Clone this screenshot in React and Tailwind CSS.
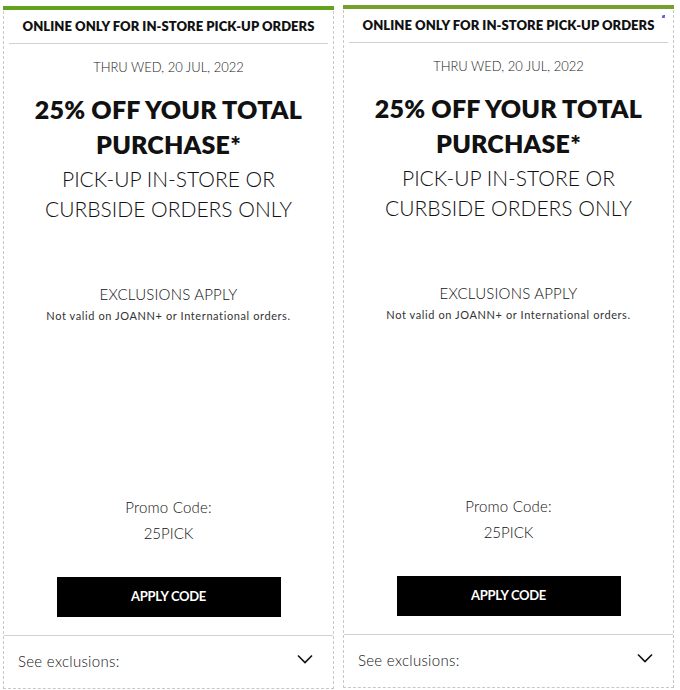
function Coupon({ offset, bar, dot }) {
  return (
    <div className={`relative w-[331px] border border-dashed border-[#c8c8c8] border-t-0 bg-white ${offset}`}>
      <div className={`h-1 -mx-px ${bar}`} />
      {dot && (
        <div className="absolute right-[8px] top-[10px] w-[3px] h-[3px] bg-gradient-to-br from-[#e0c000] via-[#2060ff] to-[#ff4040]" />
      )}
      <div className="h-[33px] flex items-center justify-center text-[13px] font-extrabold text-[#111] tracking-[0.05px]">
        ONLINE ONLY FOR IN-STORE PICK-UP ORDERS
      </div>
      <div className="mx-[5px] h-px bg-[#d0d0d0]" />
      <div className="flex flex-col items-center text-center">
        <div className="mt-[14px] text-[13px] leading-[18px] font-light text-[#222]">THRU WED, 20 JUL, 2022</div>
        <div className="mt-[16px] text-[25px] leading-[35px] font-extrabold text-[#111] tracking-[0.2px]">
          25% OFF YOUR TOTAL<br />PURCHASE*
        </div>
        <div className="mt-[2px] text-[21px] leading-[30px] font-light text-[#111]">
          PICK-UP IN-STORE OR<br />CURBSIDE ORDERS ONLY
        </div>
        <div className="mt-[60px] text-[15px] leading-[20px] font-light text-[#111] tracking-[0.2px]">EXCLUSIONS APPLY</div>
        <div className="mt-[4px] text-[11px] leading-[16px] text-[#333] tracking-[0.6px]">Not valid on JOANN+ or International orders.</div>
        <div className="mt-[172px] text-[15px] leading-[22px] font-light text-[#111] tracking-[0.2px]">Promo Code:</div>
        <div className="mt-[4px] text-[15px] leading-[22px] font-light text-[#111]">25PICK</div>
        <button className="mt-[33px] w-[224px] h-[40px] bg-black text-white text-[13px] font-bold tracking-[-0.3px]">
          APPLY CODE
        </button>
      </div>
      <div className="mt-[18px] h-px bg-[#d0d0d0]" />
      <div className="h-[52px] flex items-center justify-between pl-[14px] pr-[20px] pb-[2px]">
        <span className="text-[15px] font-light text-[#111] tracking-[0.3px]">See exclusions:</span>
        <svg width="16" height="10" viewBox="0 0 16 10" fill="none" stroke="#111" strokeWidth="1.6" className="mb-[4px]">
          <path d="M1 1.5l7 7 7-7" />
        </svg>
      </div>
    </div>
  )
}

export default function App() {
  return (
    <div className="w-[680px] h-[690px] bg-white overflow-hidden" style={{ fontFamily: 'Lato, "Open Sans", sans-serif' }}>
      <div className="flex items-start gap-[9px] pl-[3px] pt-[5px]">
        <Coupon offset="mt-px" bar="bg-[#62a21f]" />
        <Coupon offset="" bar="bg-[#74a02b]" dot />
      </div>
    </div>
  )
}
